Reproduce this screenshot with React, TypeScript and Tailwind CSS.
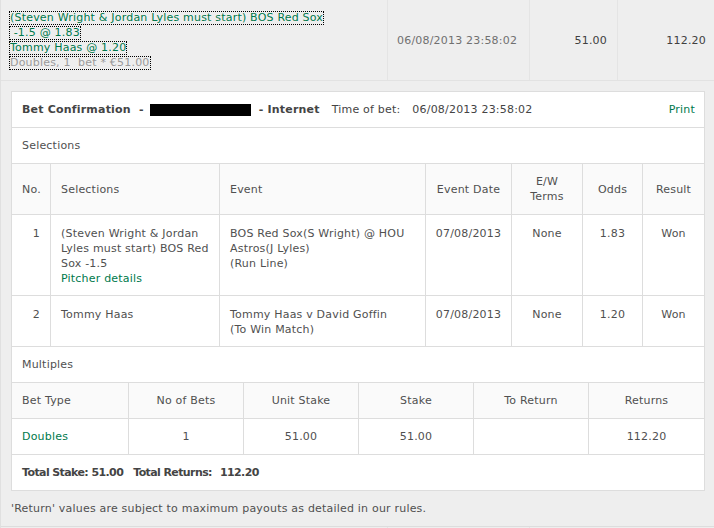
import React from 'react';

// Column widths include the right border of each cell
const selCols = [39, 169, 206, 86, 71, 60, 61];
const multCols = [117, 115, 115, 115, 115, 115];

const green = 'text-[#00794c]';
const focusBox = 'inline-block align-top h-[12px] leading-[12px] outline-1 outline-dotted outline-black';

function Cell({ w, last, className = '', children }: { w: number; last?: boolean; className?: string; children?: React.ReactNode }) {
  return (
    <div
      style={{ width: w }}
      className={`shrink-0 ${last ? '' : 'border-r border-[#dddddd]'} ${className}`}
    >
      {children}
    </div>
  );
}

export default function App() {
  return (
    <div className="w-[714px] h-[528px] overflow-hidden bg-[#eeeeee] border-l border-[#e0e0e0] font-['DejaVu_Sans',sans-serif] text-[11px] leading-[15px] tracking-[0.2px] text-[#505050]">
      {/* Bet slip summary row */}
      <div className="flex h-[81px] border-b border-[#e2e2e2]">
        <div className="w-[386px] shrink-0 pl-[9px] pt-[12px]">
          <div className="h-[15px]">
            <span className={`${green} ${focusBox}`}>(Steven Wright &amp; Jordan Lyles must start) BOS Red Sox</span>
          </div>
          <div className="h-[15px]">
            <span className={`${green} ${focusBox}`}>&nbsp;-1.5 @ 1.83</span>
          </div>
          <div className="h-[15px]">
            <span className={`${green} ${focusBox}`}>Tommy Haas @ 1.20</span>
          </div>
          <div className="h-[15px]">
            <span className={`text-[#9a9a9a] ${focusBox}`}>Doubles, 1&nbsp; bet * €51.00</span>
          </div>
        </div>
        <div className="w-[142px] shrink-0 border-l border-[#e4e4e4] pl-[9px] flex items-center text-[#707070]">
          06/08/2013 23:58:02
        </div>
        <div className="w-[88px] shrink-0 border-l border-[#e4e4e4] pr-[10px] flex items-center justify-end text-[#404040]">
          51.00
        </div>
        <div className="w-[97px] shrink-0 border-l border-[#e4e4e4] pr-[8px] flex items-center justify-end text-[#404040]">
          112.20
        </div>
      </div>

      {/* Confirmation panel */}
      <div className="ml-[10px] mt-[10px] w-[694px] border border-[#dddddd] bg-white">
        <div className="flex items-center h-[36px] border-b border-[#dddddd] pl-[10px] pr-[9px]">
          <span className="font-bold text-[#444444]">Bet Confirmation</span>
          <span className="font-bold text-[#444444] ml-[8px]">-</span>
          <span className="ml-[6px] w-[101px] h-[12px] bg-black" />
          <span className="font-bold text-[#444444] ml-[8px]">- Internet</span>
          <span className="ml-[12px] text-[#444444]">Time of bet:</span>
          <span className="ml-[12px] text-[#444444]">06/08/2013 23:58:02</span>
          <span className={`ml-auto ${green}`}>Print</span>
        </div>

        <div className="flex items-center h-[36px] border-b border-[#dddddd] pl-[10px]">Selections</div>

        {/* Selections table header */}
        <div className="flex h-[51px] border-b border-[#dddddd] bg-[#fafafa]">
          <Cell w={selCols[0]} className="flex items-center pl-[10px]">No.</Cell>
          <Cell w={selCols[1]} className="flex items-center pl-[10px]">Selections</Cell>
          <Cell w={selCols[2]} className="flex items-center pl-[10px]">Event</Cell>
          <Cell w={selCols[3]} className="flex items-center justify-center">Event Date</Cell>
          <Cell w={selCols[4]} className="flex items-center justify-center text-center">
            E/W
            <br />
            Terms
          </Cell>
          <Cell w={selCols[5]} className="flex items-center justify-center">Odds</Cell>
          <Cell w={selCols[6]} last className="flex items-center justify-center">Result</Cell>
        </div>

        {/* Selection 1 */}
        <div className="flex h-[81px] border-b border-[#dddddd]">
          <Cell w={selCols[0]} className="pt-[11px] pr-[10px] text-right">1</Cell>
          <Cell w={selCols[1]} className="pt-[11px] pl-[10px]">
            (Steven Wright &amp; Jordan
            <br />
            Lyles must start) BOS Red
            <br />
            Sox -1.5
            <br />
            <span className={green}>Pitcher details</span>
          </Cell>
          <Cell w={selCols[2]} className="pt-[11px] pl-[10px]">
            BOS Red Sox(S Wright) @ HOU
            <br />
            Astros(J Lyles)
            <br />
            (Run Line)
          </Cell>
          <Cell w={selCols[3]} className="pt-[11px] text-center">07/08/2013</Cell>
          <Cell w={selCols[4]} className="pt-[11px] text-center">None</Cell>
          <Cell w={selCols[5]} className="pt-[11px] text-center">1.83</Cell>
          <Cell w={selCols[6]} last className="pt-[11px] text-center">Won</Cell>
        </div>

        {/* Selection 2 */}
        <div className="flex h-[51px] border-b border-[#dddddd]">
          <Cell w={selCols[0]} className="pt-[11px] pr-[10px] text-right">2</Cell>
          <Cell w={selCols[1]} className="pt-[11px] pl-[10px]">Tommy Haas</Cell>
          <Cell w={selCols[2]} className="pt-[11px] pl-[10px]">
            Tommy Haas v David Goffin
            <br />
            (To Win Match)
          </Cell>
          <Cell w={selCols[3]} className="pt-[11px] text-center">07/08/2013</Cell>
          <Cell w={selCols[4]} className="pt-[11px] text-center">None</Cell>
          <Cell w={selCols[5]} className="pt-[11px] text-center">1.20</Cell>
          <Cell w={selCols[6]} last className="pt-[11px] text-center">Won</Cell>
        </div>

        <div className="flex items-center h-[36px] border-b border-[#dddddd] pl-[10px]">Multiples</div>

        {/* Multiples header */}
        <div className="flex h-[36px] border-b border-[#dddddd] bg-[#fafafa]">
          <Cell w={multCols[0]} className="flex items-center pl-[10px]">Bet Type</Cell>
          <Cell w={multCols[1]} className="flex items-center justify-center">No of Bets</Cell>
          <Cell w={multCols[2]} className="flex items-center justify-center">Unit Stake</Cell>
          <Cell w={multCols[3]} className="flex items-center justify-center">Stake</Cell>
          <Cell w={multCols[4]} className="flex items-center justify-center">To Return</Cell>
          <Cell w={multCols[5]} last className="flex items-center justify-center">Returns</Cell>
        </div>

        <div className="flex h-[36px] border-b border-[#dddddd]">
          <Cell w={multCols[0]} className={`flex items-center pl-[10px] ${green}`}>Doubles</Cell>
          <Cell w={multCols[1]} className="flex items-center justify-center">1</Cell>
          <Cell w={multCols[2]} className="flex items-center justify-center">51.00</Cell>
          <Cell w={multCols[3]} className="flex items-center justify-center">51.00</Cell>
          <Cell w={multCols[4]} className="flex items-center justify-center" />
          <Cell w={multCols[5]} last className="flex items-center justify-center">112.20</Cell>
        </div>

        <div className="flex items-center h-[35px] pl-[10px] font-bold tracking-[-0.6px] text-[#444444]">
          <span>Total Stake: 51.00</span>
          <span className="ml-[10px]">Total Returns:</span>
          <span className="ml-[8px]">112.20</span>
        </div>
      </div>

      <div className="flex items-center h-[35px] pl-[10px]">
        'Return' values are subject to maximum payouts as detailed in our rules.
      </div>
      <div className="flex h-[2px] border-t border-[#dddddd]">
        <div className="w-[386px] shrink-0" />
        <div className="w-[142px] shrink-0 border-l border-[#e4e4e4]" />
        <div className="w-[88px] shrink-0 border-l border-[#e4e4e4]" />
      </div>
    </div>
  );
}
